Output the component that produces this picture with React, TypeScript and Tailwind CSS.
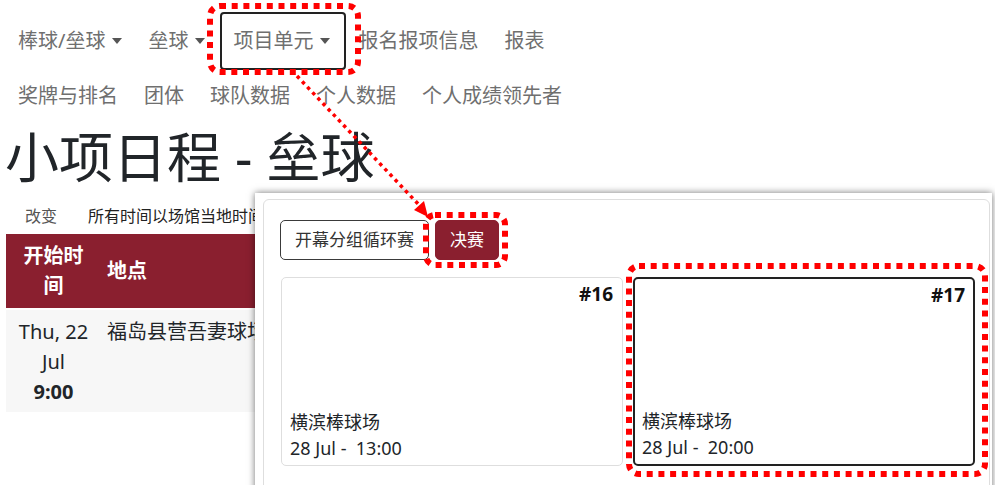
import React from "react";

const navTop = [
    { label: "棒球/垒球", caret: true },
    { label: "垒球", caret: true },
];

const navBottom = ["奖牌与排名", "团体", "球队数据", "个人数据", "个人成绩领先者"];

const Caret: React.FC = () => (
    <span className="ml-[7px] inline-block h-0 w-0 border-x-[5px] border-t-[6px] border-x-transparent border-t-[#555]" />
);

interface MatchCardProps {
    no: string;
    venue: string;
    time: string;
    active?: boolean;
}

const MatchCard: React.FC<MatchCardProps> = ({ no, venue, time, active }) => (
    <div
        className={`flex h-[189px] w-[342px] flex-col rounded-[5px] bg-white ${
            active ? "border-2 border-[#222] pl-[7px] pr-[8px]" : "border border-[#dedede] pl-[8px] pr-[9px]"
        }`}
    >
        <div className="pt-[4px] text-right text-[19px] font-bold leading-[24px] text-[#111]">{no}</div>
        <div className="mt-auto pb-[4px] text-[18px] leading-[26px] text-[#212529]">
            <div>{venue}</div>
            <div className="whitespace-pre">{time}</div>
        </div>
    </div>
);

export default function App() {
    return (
        <div className="relative h-[485px] w-[995px] overflow-hidden bg-white font-['Noto_Sans','Noto_Sans_CJK_SC',sans-serif] text-[#212529]">
            {/* top nav */}
            <div className="pt-[12px]">
                <div className="flex h-[58px] items-center text-[20px] text-[#6f6f6f]">
                    <div className="ml-[18px] flex items-center">
                        {navTop[0].label}
                        <Caret />
                    </div>
                    <div className="ml-[26px] flex items-center">
                        {navTop[1].label}
                        <Caret />
                    </div>
                    <div className="ml-[15px] flex h-full items-center rounded-[4px] border-2 border-[#222] pl-[11px] pr-[14px]">
                        项目单元
                        <Caret />
                    </div>
                    <div className="ml-[12px]">报名报项信息</div>
                    <div className="ml-[26px]">报表</div>
                </div>
                <div className="flex h-[52px] items-center gap-[26px] pl-[18px] text-[20px] text-[#6f6f6f]">
                    {navBottom.map((item) => (
                        <div key={item}>{item}</div>
                    ))}
                </div>
            </div>

            <h1 className="mt-[4px] h-[62px] pl-[5px] text-[54px] leading-[62px] font-normal text-[#212529]">
                小项日程 - 垒球
            </h1>

            <div className="flex h-[46px] items-center pt-[10px] text-[16px] leading-[24px]">
                <span className="ml-[25px] text-[#555]">改变</span>
                <span className="ml-[31px] text-[#222]">所有时间以场馆当地时间显示</span>
            </div>

            {/* schedule table */}
            <div className="mx-[6px]">
                <div className="flex h-[74px] items-center bg-[#8a1f2f] text-[20px] font-bold leading-[30px] text-white">
                    <div className="w-[95px] text-center">
                        开始时
                        <br />间
                    </div>
                    <div className="pl-[6px]">地点</div>
                </div>
                <div className="mt-[2px] flex h-[102px] items-start bg-[#f7f7f7] pt-[7px] text-[20px] leading-[30px] text-[#212529]">
                    <div className="w-[95px] whitespace-nowrap text-center">
                        Thu, 22
                        <br />
                        Jul
                        <br />
                        <span className="font-bold">9:00</span>
                    </div>
                    <div className="pl-[6px]">福岛县营吾妻球场</div>
                </div>
            </div>

            {/* zoomed panel */}
            <div className="absolute left-[255px] top-[193px] h-[300px] w-[737px] overflow-hidden bg-white shadow-[0_0_7px_rgba(0,0,0,0.55)]">
                <div className="ml-[8px] mr-[2px] mt-[6px] h-[320px] rounded-[6px] border border-[#dedede] pl-[16px] pt-[20px]">
                    <div className="flex gap-[6px] text-[17px]">
                        <button className="h-[40px] rounded-[5px] border border-[#3a3a3a] px-[14px] text-[#333]">
                            开幕分组循环赛
                        </button>
                        <button className="h-[40px] rounded-[5px] border border-[#8a1f2f] bg-[#8a1f2f] px-[14px] text-white">
                            决赛
                        </button>
                    </div>
                    <div className="mt-[17px] flex gap-[10px] pl-[1px]">
                        <MatchCard no="#16" venue="横滨棒球场" time="28 Jul -  13:00" />
                        <MatchCard no="#17" venue="横滨棒球场" time="28 Jul -  20:00" active />
                    </div>
                </div>
            </div>

            {/* annotations */}
            <svg className="pointer-events-none absolute inset-0 z-10" width="995" height="485" viewBox="0 0 995 485">
                <g fill="none" stroke="#ff0000" strokeWidth="6" strokeDasharray="6 5.7">
                    <rect x="210" y="6" width="148" height="66" rx="10" />
                    <rect x="426" y="215" width="79" height="50" rx="9" />
                    <rect x="629" y="266" width="356" height="208" rx="10" />
                </g>
                <line x1="297" y1="76" x2="421" y2="207" stroke="#ff0000" strokeWidth="3.5" strokeDasharray="3.5 4" />
                <polygon points="428,217 414,210 424,201" fill="#ff0000" />
            </svg>
        </div>
    );
}
